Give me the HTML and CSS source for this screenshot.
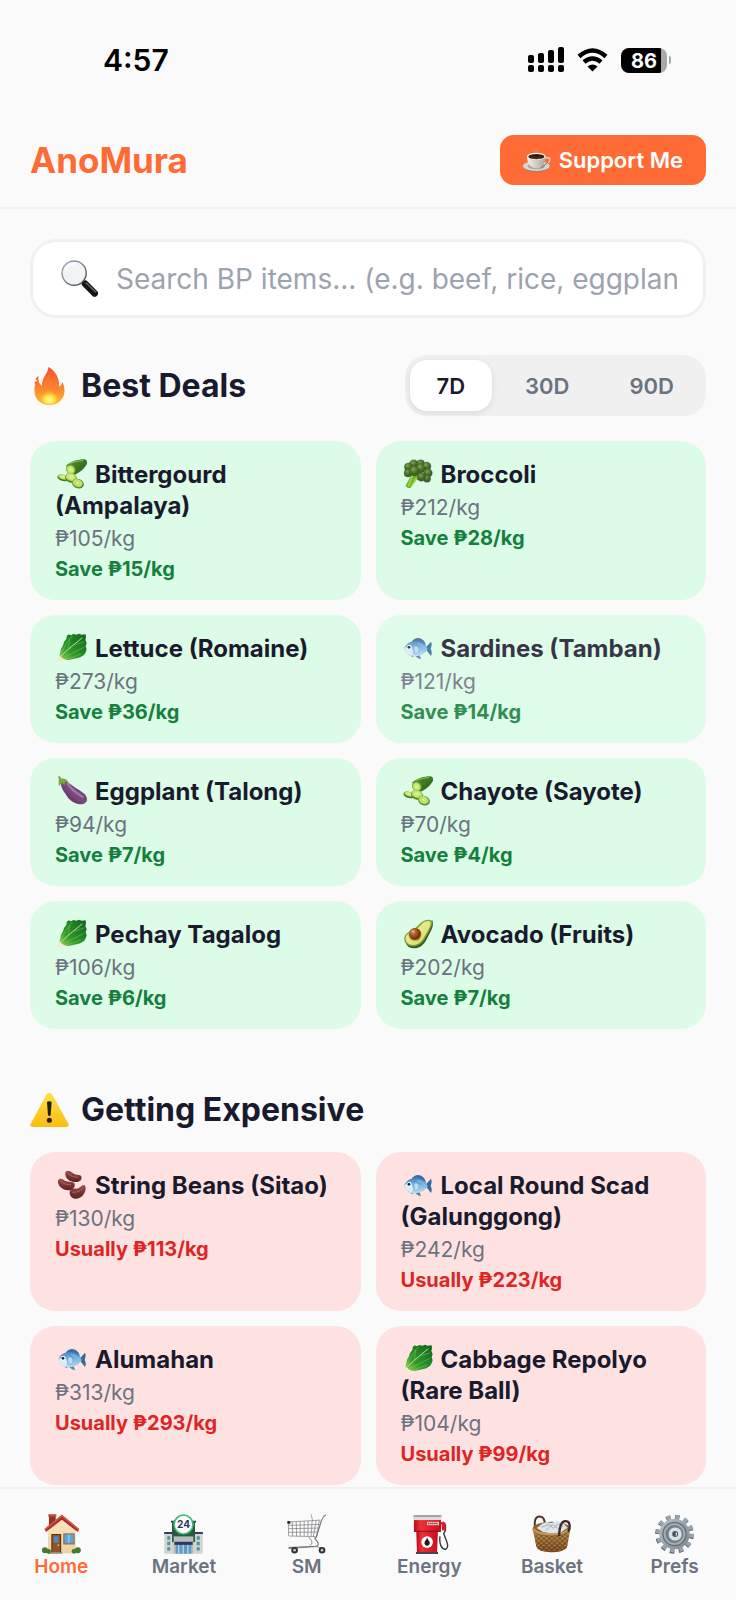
FILE: index.html
```html
<!DOCTYPE html>
<html lang="en">
<head>
<meta charset="utf-8">
<meta name="viewport" content="width=device-width, initial-scale=1">
<title>AnoMura</title>
<link rel="stylesheet" href="styles.css">
</head>
<body>
<svg class="sprite" aria-hidden="true">
  <defs>
    <linearGradient id="g-leaf" x1="0" y1="1" x2="1" y2="0"><stop offset="0" stop-color="#9bd04a"/><stop offset=".35" stop-color="#2f9a2c"/><stop offset="1" stop-color="#0a621d"/></linearGradient>
    <linearGradient id="g-cuke" x1="0" y1="0" x2="1" y2="1"><stop offset="0" stop-color="#5f9c30"/><stop offset="1" stop-color="#1d5418"/></linearGradient>
    <radialGradient id="g-slice"><stop offset="0" stop-color="#e2f29c"/><stop offset=".7" stop-color="#c3e36c"/><stop offset="1" stop-color="#95c744"/></radialGradient>
    <radialGradient id="g-floret" cx=".4" cy=".3"><stop offset="0" stop-color="#7d9c45"/><stop offset="1" stop-color="#3d6326"/></radialGradient>
    <linearGradient id="g-fish" x1="0" y1="0" x2="0" y2="1"><stop offset="0" stop-color="#3f83bd"/><stop offset=".5" stop-color="#7db9e3"/><stop offset="1" stop-color="#c4dcec"/></linearGradient>
    <linearGradient id="g-egg" x1="0" y1="1" x2="1" y2="0"><stop offset="0" stop-color="#4c2350"/><stop offset=".5" stop-color="#7d4a80"/><stop offset="1" stop-color="#5a2c60"/></linearGradient>
    <linearGradient id="g-avo" x1="0" y1="0" x2="1" y2="1"><stop offset="0" stop-color="#f5f2a0"/><stop offset="1" stop-color="#cfdc6a"/></linearGradient>
    <radialGradient id="g-pit" cx=".35" cy=".35"><stop offset="0" stop-color="#d68a4c"/><stop offset="1" stop-color="#7c3514"/></radialGradient>
    <linearGradient id="g-bean" x1="0" y1="0" x2="0" y2="1"><stop offset="0" stop-color="#96504b"/><stop offset="1" stop-color="#5c1f20"/></linearGradient>
    <linearGradient id="g-fire" x1="0" y1="0" x2="0" y2="1"><stop offset="0" stop-color="#f4502f"/><stop offset=".6" stop-color="#f98b2c"/><stop offset="1" stop-color="#fdc12f"/></linearGradient>
    <radialGradient id="g-flame" cy=".8"><stop offset="0" stop-color="#fffbb0"/><stop offset=".5" stop-color="#ffdd3c"/><stop offset="1" stop-color="#ff9d2e" stop-opacity="0"/></radialGradient>
    <linearGradient id="g-warn" x1="0" y1="0" x2="0" y2="1"><stop offset="0" stop-color="#ffdf45"/><stop offset="1" stop-color="#fbbd10"/></linearGradient>
    <linearGradient id="g-rim" x1="0" y1="0" x2="1" y2="1"><stop offset="0" stop-color="#8fa8d8"/><stop offset=".4" stop-color="#8b8d92"/><stop offset="1" stop-color="#3c3d40"/></linearGradient>
    <linearGradient id="g-cup" x1="0" y1="0" x2="1" y2="0"><stop offset="0" stop-color="#f4f1ec"/><stop offset="1" stop-color="#aaa69f"/></linearGradient>
    <linearGradient id="g-wall" x1="0" y1="0" x2="0" y2="1"><stop offset="0" stop-color="#fbe6bd"/><stop offset="1" stop-color="#ecd0a0"/></linearGradient>
    <linearGradient id="g-pump" x1="0" y1="0" x2="1" y2="0"><stop offset="0" stop-color="#b60d18"/><stop offset=".25" stop-color="#f0303a"/><stop offset="1" stop-color="#c90f1c"/></linearGradient>
    <linearGradient id="g-basket" x1="0" y1="0" x2="0" y2="1"><stop offset="0" stop-color="#b98a4a"/><stop offset="1" stop-color="#6d4319"/></linearGradient>
    <linearGradient id="g-gear" x1="0" y1="0" x2="1" y2="1"><stop offset="0" stop-color="#b9c3cb"/><stop offset="1" stop-color="#7d868e"/></linearGradient>
    <pattern id="p-weave" width="16" height="14" patternUnits="userSpaceOnUse"><path d="M0 3h8M8 10h8" stroke="#5c3612" stroke-width="4"/><path d="M8 3h8M0 10h8" stroke="#d9ab66" stroke-width="3"/></pattern>
  </defs>

  <symbol id="cucumber" viewBox="0 0 90 90">
    <path d="M27 20C42 7 62 1 82 1c9 1 10 10 6 17-8 13-24 25-37 30z" fill="url(#g-cuke)"/>
    <path d="M38 14C51 8 64 5 78 5" fill="none" stroke="#8cc04a" stroke-width="3"/>
    <ellipse cx="42" cy="31" rx="14" ry="16" transform="rotate(-30 42 31)" fill="#5d982c"/>
    <ellipse cx="41" cy="32" rx="12" ry="14" transform="rotate(-30 41 32)" fill="url(#g-slice)"/>
    <ellipse cx="17" cy="57" rx="16" ry="9" transform="rotate(18 17 57)" fill="#3f7a20"/>
    <ellipse cx="18" cy="54" rx="15" ry="7" transform="rotate(18 18 54)" fill="url(#g-slice)"/>
    <ellipse cx="42" cy="57" rx="18" ry="14" transform="rotate(15 42 57)" fill="#4a8524"/>
    <ellipse cx="42" cy="54" rx="17" ry="12" transform="rotate(15 42 54)" fill="url(#g-slice)"/>
    <ellipse cx="63" cy="74" rx="18" ry="14" transform="rotate(20 63 74)" fill="#4e8a28"/>
    <ellipse cx="62" cy="72" rx="16" ry="12" transform="rotate(20 62 72)" fill="url(#g-slice)"/>
    <ellipse cx="61" cy="72" rx="8" ry="5" transform="rotate(20 61 72)" fill="none" stroke="#b2d45c" stroke-width="2"/>
  </symbol>

  <symbol id="greens" viewBox="0 0 90 90">
    <path d="M29 9l6-5 7 3 7-4 9 2 8-3 8 3 12-1 1 9-2 8 4 9-3 10 3 9-3 9-5 8-11 7-12 3-12 3-12 2-16-2L6 72l4-14 2-11 6-10 3-10 7-9z" fill="url(#g-leaf)"/>
    <path d="M9 71c7-20 17-38 37-62M12 76c22-8 44-20 70-34M18 79c16-2 36-8 55-17M35 48l2-31M53 36l28-9" fill="none" stroke="#8cc358" stroke-width="1.6"/>
    <path d="M9 66c3 7 8 11 16 13-6 4-14 10-20 7S1 76 9 66z" fill="#f3ecd0"/>
    <path d="M10 72C26 54 50 36 76 14" stroke="#c5e28c" stroke-width="3" fill="none"/>
  </symbol>

  <symbol id="broccoli" viewBox="0 0 90 90">
    <path d="M26 45L8 80q2 7 14 7l18-23 22-8-14-22z" fill="#6fb32c"/>
    <path d="M28 50L16 82M42 54L24 84M55 50L38 62" stroke="#a6dc55" stroke-width="4" fill="none"/>
    <g fill="url(#g-floret)" stroke="#365520" stroke-width="1">
      <circle cx="32" cy="15" r="13"/><circle cx="53" cy="14" r="12"/><circle cx="16" cy="24" r="12"/><circle cx="71" cy="22" r="13"/><circle cx="15" cy="42" r="12"/><circle cx="75" cy="42" r="13"/><circle cx="72" cy="59" r="11"/><circle cx="55" cy="54" r="13"/><circle cx="53" cy="28" r="14"/><circle cx="34" cy="36" r="15"/>
    </g>
    <g fill="#8ba754" opacity=".55"><circle cx="29" cy="12" r="3"/><circle cx="50" cy="24" r="4"/><circle cx="31" cy="33" r="4"/><circle cx="68" cy="19" r="4"/><circle cx="13" cy="21" r="3"/><circle cx="73" cy="39" r="3"/></g>
  </symbol>

  <symbol id="fish" viewBox="0 0 90 90">
    <path d="M26 27C34 12 52 10 64 25l5 12z" fill="#3b6f9e"/>
    <path d="M36 68l14-2 4 13-9-3zM20 64l8 9 7-6z" fill="#5484ab"/>
    <path d="M66 46l18-20c4 8 1 15-1 22 3 6 5 13 1 21z" fill="#356a9a"/>
    <path d="M3 46C10 29 28 22 45 24c16 3 24 13 29 24-6 13-22 21-39 22C17 71 6 61 3 46z" fill="url(#g-fish)"/>
    <path d="M3 48c8-10 22-10 26 2 3 9-1 16-6 17C12 64 5 57 3 48z" fill="#dcebf4"/>
    <path d="M35 38c16 1 17 19 3 25-6-7-7-17-3-25z" fill="#b5ddf4" stroke="#5d9bc7" stroke-width="1.5"/>
    <circle cx="19" cy="43" r="7" fill="#fff"/><circle cx="18" cy="43" r="4.2" fill="#16202a"/>
    <path d="M43 31q14 3 23 15" stroke="#a4d5f2" stroke-width="2" fill="none"/>
  </symbol>

  <symbol id="eggplant" viewBox="0 0 90 90">
    <path d="M14 17C31 13 40 24 55 35c17 11 35 19 35 35 0 13-13 17-27 14C43 79 33 67 24 52 17 40 8 29 14 17z" fill="url(#g-egg)"/>
    <path d="M32 22c8 15 24 28 45 40" stroke="#ba8cba" stroke-width="7" stroke-linecap="round" fill="none" opacity=".65"/>
    <path d="M2 2l7-1 4 7c9-2 18 3 22 11l-10-1-3 10-6-8-11 10c1-7-1-15 1-21z" fill="#78a838"/>
  </symbol>

  <symbol id="avocado" viewBox="0 0 90 90">
    <path d="M88 4c6 18-5 33-16 55C62 79 48 89 31 88 14 86 5 74 9 60z" fill="#3c5a28"/>
    <path d="M57 9C67 1 81 0 86 5c5 10-4 28-17 49C58 73 46 82 31 82 14 82 2 71 4 57 6 42 22 36 34 29 44 23 48 15 57 9z" fill="#7f9f38"/>
    <path d="M60 12c8-6 18-7 22-4 4 8-5 24-17 44-9 17-20 26-34 26C16 78 7 69 8 57c1-12 17-18 28-24 11-6 16-14 24-21z" fill="url(#g-avo)"/>
    <circle cx="36" cy="47" r="20" fill="#c9b848"/><circle cx="36" cy="45" r="18" fill="url(#g-pit)"/>
    <ellipse cx="30" cy="37" rx="6" ry="4" fill="#edb27b" opacity=".7"/>
  </symbol>

  <symbol id="beans" viewBox="0 0 90 90">
    <g fill="url(#g-bean)">
      <path d="M25 9C27-1 38 1 46 8c9 8 18 4 26 9 5 9-2 19-15 19C40 36 23 26 25 9z"/>
      <path d="M3 32C7 22 16 27 24 32c9 5 18 1 27 6 7 9-2 23-18 23C17 60 1 47 3 32z"/>
      <path d="M38 71c-1-14 8-17 20-15 11 0 15-11 23-11 8 3 6 20-3 31-12 14-36 15-40-5z"/>
    </g>
    <path d="M32 9c7 8 17 13 30 13M10 33c8 8 18 12 31 11M46 67c12 1 24-3 31-13" stroke="#c98c83" stroke-width="2.5" stroke-linecap="round" fill="none" opacity=".6"/>
  </symbol>

  <symbol id="fire" viewBox="0 0 90 114">
    <path d="M42 0c-3 23-20 31-20 56C14 51 12 43 12 35 3 43-1 56 0 73c1 25 19 41 45 41 27 0 44-17 45-41 1-12-3-20-6-28-2 7-5 11-10 14C76 32 61 11 42 0z" fill="url(#g-fire)"/>
    <path d="M13 28l-4 12-5-2c0-5 4-9 9-10zM4 42l1 7-4 3c-1-4 0-8 3-10z" fill="#f4502f"/>
    <path d="M44 24c-4 16-14 25-14 42 10-4 15-13 17-23 9 11 14 22 13 33 5-3 8-8 10-14" fill="none" stroke="#ff7a3c" stroke-width="5" opacity=".7"/>
    <path d="M12 78c5 5 8 6 14 5-2-14 8-24 19-31 1 12 15 14 17 31 7 0 10-4 15-7 1 20-11 35-32 35S11 98 12 78z" fill="url(#g-flame)"/>
  </symbol>

  <symbol id="warning" viewBox="0 0 117 102">
    <path d="M50 4q8-8 16 0l49 88q4 10-7 10H9q-11 0-7-10z" fill="url(#g-warn)"/>
    <path d="M51 27q7-5 14 0l-3 40q-4 4-8 0z" fill="#20201c"/><circle cx="58" cy="82" r="7.5" fill="#20201c"/>
  </symbol>

  <symbol id="search" viewBox="0 0 110 110">
    <path d="M65 65l10 10" stroke="#77797e" stroke-width="6"/>
    <path d="M72 71l28 28" stroke="#141416" stroke-width="20" stroke-linecap="round"/>
    <path d="M73 67l31 29" stroke="#67696d" stroke-width="4"/>
    <circle cx="39" cy="39" r="36" fill="#f1f3f5" stroke="url(#g-rim)" stroke-width="4"/>
    <path d="M12 34C16 18 29 10 44 11" stroke="#fff" stroke-width="5" fill="none"/>
  </symbol>

  <symbol id="coffee" viewBox="0 0 84 75">
    <path d="M34 11c-5-4 5-6 0-11M43 11c-4-4 3-6 0-10" fill="none" stroke="#c9b2a2" stroke-width="1.5"/>
    <ellipse cx="40" cy="57" rx="40" ry="15" fill="#8f8981"/><ellipse cx="40" cy="54" rx="40" ry="15" fill="#d9d5cd"/><ellipse cx="40" cy="54" rx="26" ry="10" fill="#aca69c"/>
    <path d="M64 32c18-9 24 6 4 18" fill="none" stroke="#d8d4ce" stroke-width="4"/>
    <path d="M12 25c0 20 10 36 28 36s28-16 28-36z" fill="url(#g-cup)"/>
    <ellipse cx="40" cy="25" rx="28" ry="11" fill="#f6f4ef"/><ellipse cx="40" cy="26" rx="24" ry="8" fill="#38200f"/><path d="M26 29q14 7 28 0" stroke="#85583a" stroke-width="2" fill="none"/>
    <path d="M55 60l20-17" stroke="#777" stroke-width="3" stroke-linecap="round"/>
  </symbol>

  <symbol id="home" viewBox="0 0 114 118">
    <path d="M20 2h20v34H20z" fill="#92302a"/><path d="M18 1h24v7H18z" fill="#bf4c3d"/>
    <path d="M17 47L58 12l41 35v69H17z" fill="url(#g-wall)"/>
    <path d="M58 2L7 44l4 9 47-36 47 36 4-9z" fill="#a92e29"/><path d="M58 2L7 44l3 3L58 8l48 39 3-3z" fill="#d65a47"/>
    <path d="M27 59h29v56H27z" fill="#5a3018"/><path d="M30 62h23v52H30z" fill="#92522d"/><path d="M34 66h14v18H34z" fill="#4b8fc0"/><circle cx="48" cy="92" r="2.5" fill="#f0c450"/>
    <path d="M62 57h34v33H62z" fill="#8f7763"/><path d="M66 61h26v24H66z" fill="#5ca4dc"/><path d="M79 61v24" stroke="#d7eafa" stroke-width="2"/>
    <path d="M19 112h40v5H15z" fill="#9b8a7b"/>
    <g fill="#477a2a"><circle cx="8" cy="107" r="9"/><circle cx="19" cy="110" r="7"/><circle cx="105" cy="107" r="9"/><circle cx="94" cy="110" r="7"/></g>
  </symbol>

  <symbol id="cart" viewBox="0 0 118 120">
    <g fill="none" stroke="#75777b">
      <path d="M117 2c-9 5-10 11-14 21L89 69l-5 5 8 9q7 13-6 14L5 101" stroke-width="3.5"/>
      <path d="M3 24l98-6M5 34l93-3M5 44l90-2M5 55l86-1M6 66l81 2" stroke-width="2"/>
      <path d="M4 24l1 42M16 24l1 42M28 23l1 44M40 22v45M52 21v46M64 20l-1 47M76 20l-3 47M88 19l-8 49M73 1l5 20M98 19L89 68" stroke-width="2"/>
      <path d="M66 69l9 12q4 9-6 14M5 104l84-6 24 8" stroke-width="2.5"/>
    </g>
    <path d="M1 21h9v8H1z" fill="#222"/>
    <g fill="#303133"><circle cx="23" cy="109" r="10"/><circle cx="106" cy="109" r="10"/></g><g fill="#c6c7ca"><circle cx="23" cy="109" r="4"/><circle cx="106" cy="109" r="4"/></g>
  </symbol>

  <symbol id="pump" viewBox="0 0 114 118">
    <path d="M91 29q9-10 13 4v15l-5 10c8 21 18 40 6 46-12 1-20-15-17-38" fill="none" stroke="#333538" stroke-width="4"/>
    <path d="M92 24q10-5 12 8v17H94z" fill="#dc1d2a"/>
    <path d="M18 51h64l-3 64H20z" fill="url(#g-pump)"/><path d="M11 9h80v43H11z" fill="url(#g-pump)"/>
    <path d="M10 4h82v14H10z" fill="#dadcdf"/><path d="M10 4h82v4H10z" fill="#85878a"/><path d="M50 23h35v10H50z" fill="#f7ced0"/><path d="M53 28h29" stroke="#6c3034" stroke-width="4" stroke-dasharray="4 2"/>
    <path d="M11 51h80" stroke="#801017" stroke-width="3"/><path d="M17 112h65v6H17z" fill="#45474a"/>
    <circle cx="50" cy="83" r="17" fill="#fff"/><path d="M50 69c2 8 8 10 8 17q-1 8-8 8t-8-8c0-7 6-9 8-17z" fill="#1d1d1f"/>
  </symbol>

  <symbol id="basket" viewBox="0 0 118 118">
    <path d="M10 45C5 18 11 6 23 6s15 9 17 26" fill="none" stroke="#4c3526" stroke-width="6"/>
    <ellipse cx="59" cy="43" rx="57" ry="21" fill="#8e602b"/>
    <path d="M14 41l17-13 12-5 16 3 18-7 18 8 13 13-19 13-27 5-29-5z" fill="#dfe4ea"/><path d="M28 38l25-8 11 12 16-14 15 9M42 48l20-17 24 15" fill="none" stroke="#98a5b4" stroke-width="2.5"/>
    <path d="M3 47c15 20 98 22 113-5l-10 57q-9 15-48 15t-45-17z" fill="url(#g-basket)"/><path d="M3 47c15 20 98 22 113-5l-10 57q-9 15-48 15t-45-17z" fill="url(#p-weave)" opacity=".55"/>
    <path d="M3 44c15 22 99 23 112-3" fill="none" stroke="#c4985b" stroke-width="8"/><path d="M4 51c16 19 97 20 110-3" fill="none" stroke="#6e471f" stroke-width="2"/>
    <path d="M82 66C83 36 89 18 103 20c13 1 13 19 7 32" fill="none" stroke="#3e2b20" stroke-width="7"/>
  </symbol>

  <symbol id="gear" viewBox="0 0 118 118">
    <circle cx="59" cy="60" r="50" fill="none" stroke="#565f67" stroke-width="17" stroke-dasharray="13 13.18"/>
    <circle cx="60" cy="58" r="50" fill="none" stroke="#98a4ae" stroke-width="15" stroke-dasharray="12 14.18"/>
    <circle cx="59" cy="59" r="46" fill="url(#g-gear)"/><circle cx="59" cy="59" r="37" fill="#646e76"/><circle cx="59" cy="59" r="33" fill="#a0acb5"/><circle cx="59" cy="59" r="27" fill="#737e87"/>
    <circle cx="61" cy="59" r="20" fill="#d8e1e7"/><circle cx="61" cy="59" r="9" fill="#4b5258"/><path d="M63 52q8 7 0 14z" fill="#e3eaee"/>
  </symbol>
</svg>

<div class="status">
  <time class="clock">4:57</time>
  <div class="indicators">
    <svg class="signal" viewBox="0 0 36 26" aria-label="Signal"><rect y="8" width="6" height="8" rx="2"/><rect x="10" y="6" width="6" height="10" rx="2"/><rect x="20" y="3" width="6" height="13" rx="2"/><rect x="30" y="0" width="6" height="16" rx="2"/><rect y="18" width="6" height="7" rx="2"/><rect x="10" y="18" width="6" height="7" rx="2"/><rect x="20" y="18" width="6" height="7" rx="2"/><rect x="30" y="18" width="6" height="7" rx="2"/></svg>
    <svg class="wifi" viewBox="0 0 31 24" aria-label="Wi-Fi"><path d="M2 8.500Q15.500-3.500 29 8.500M7 14q8.500-7 17 0" fill="none" stroke="#000" stroke-width="4.500"/><path d="M10.500 18.500q5-4 10 0l-5 5z"/></svg>
    <div class="battery"><span class="charge">86</span></div>
  </div>
</div>

<header class="header">
  <h1 class="brand">AnoMura</h1>
  <button class="support" type="button"><svg class="cup"><use href="#coffee"/></svg>Support Me</button>
</header>

<main class="content">
  <label class="search">
    <svg class="lens" role="img" aria-label="Search"><use href="#search"/></svg>
    <input class="query" type="text" placeholder="Search BP items... (e.g. beef, rice, eggplant)">
  </label>

  <section class="section">
    <div class="section-head">
      <h2 class="title"><svg class="title-icon"><use href="#fire"/></svg>Best Deals</h2>
      <div class="range" role="group" aria-label="Period">
        <button class="period active" type="button" aria-pressed="true">7D</button>
        <button class="period" type="button" aria-pressed="false">30D</button>
        <button class="period" type="button" aria-pressed="false">90D</button>
      </div>
    </div>
    <div class="cards">
      <article class="card deal"><h3 class="name"><svg class="emoji"><use href="#cucumber"/></svg>Bittergourd (Ampalaya)</h3><p class="price">₱105/kg</p><p class="note">Save ₱15/kg</p></article>
      <article class="card deal"><h3 class="name"><svg class="emoji"><use href="#broccoli"/></svg>Broccoli</h3><p class="price">₱212/kg</p><p class="note">Save ₱28/kg</p></article>
      <article class="card deal"><h3 class="name"><svg class="emoji"><use href="#greens"/></svg>Lettuce (Romaine)</h3><p class="price">₱273/kg</p><p class="note">Save ₱36/kg</p></article>
      <article class="card deal faded"><h3 class="name"><svg class="emoji"><use href="#fish"/></svg>Sardines (Tamban)</h3><p class="price">₱121/kg</p><p class="note">Save ₱14/kg</p></article>
      <article class="card deal"><h3 class="name"><svg class="emoji"><use href="#eggplant"/></svg>Eggplant (Talong)</h3><p class="price">₱94/kg</p><p class="note">Save ₱7/kg</p></article>
      <article class="card deal"><h3 class="name"><svg class="emoji"><use href="#cucumber"/></svg>Chayote (Sayote)</h3><p class="price">₱70/kg</p><p class="note">Save ₱4/kg</p></article>
      <article class="card deal"><h3 class="name"><svg class="emoji"><use href="#greens"/></svg>Pechay Tagalog</h3><p class="price">₱106/kg</p><p class="note">Save ₱6/kg</p></article>
      <article class="card deal"><h3 class="name"><svg class="emoji"><use href="#avocado"/></svg>Avocado (Fruits)</h3><p class="price">₱202/kg</p><p class="note">Save ₱7/kg</p></article>
    </div>
  </section>

  <section class="section">
    <div class="section-head">
      <h2 class="title"><svg class="title-icon"><use href="#warning"/></svg>Getting Expensive</h2>
    </div>
    <div class="cards">
      <article class="card rise"><h3 class="name"><svg class="emoji"><use href="#beans"/></svg>String Beans (Sitao)</h3><p class="price">₱130/kg</p><p class="note">Usually ₱113/kg</p></article>
      <article class="card rise"><h3 class="name"><svg class="emoji"><use href="#fish"/></svg>Local Round Scad (Galunggong)</h3><p class="price">₱242/kg</p><p class="note">Usually ₱223/kg</p></article>
      <article class="card rise"><h3 class="name"><svg class="emoji"><use href="#fish"/></svg>Alumahan</h3><p class="price">₱313/kg</p><p class="note">Usually ₱293/kg</p></article>
      <article class="card rise"><h3 class="name"><svg class="emoji"><use href="#greens"/></svg>Cabbage Repolyo (Rare Ball)</h3><p class="price">₱104/kg</p><p class="note">Usually ₱99/kg</p></article>
    </div>
  </section>
</main>

<nav class="tabs">
  <a class="tab current" href="#" aria-current="page"><svg class="tab-icon"><use href="#home"/></svg>Home</a>
  <a class="tab" href="#">
    <svg class="tab-icon" viewBox="0 0 114 118">
      <path d="M0 54h114v63H0z" fill="#d3d6ce"/><path d="M0 53h28v6H0zM86 53h28v6H86z" fill="#353968"/>
      <path d="M23 23h68v60H23z" fill="#275c43"/><path d="M20 20h12v5H20zM82 20h12v5H82z" fill="#30345f"/>
      <path d="M28 66h58v51H28z" fill="#b9beb9"/><path d="M34 88h46v29H34z" fill="#5f9bbf"/><path d="M43 88v29M56 88v29M70 88v29" stroke="#d1e6ee" stroke-width="3"/><path d="M30 82h54v9H30z" fill="#2f3568"/>
      <path d="M9 66h9v10H9zM9 82h9v10H9zM9 98h9v10H9zM96 66h9v10h-9zM96 82h9v10h-9zM96 98h9v10h-9z" fill="#4e92ab"/>
      <circle cx="57" cy="31" r="28" fill="#fff" stroke="#3bbd6c" stroke-width="5"/>
      <text x="57" y="42" text-anchor="middle" class="sign">24</text>
    </svg>
    Market
  </a>
  <a class="tab" href="#"><svg class="tab-icon"><use href="#cart"/></svg>SM</a>
  <a class="tab" href="#"><svg class="tab-icon"><use href="#pump"/></svg>Energy</a>
  <a class="tab" href="#"><svg class="tab-icon"><use href="#basket"/></svg>Basket</a>
  <a class="tab" href="#"><svg class="tab-icon"><use href="#gear"/></svg>Prefs</a>
</nav>
</body>
</html>
```
FILE: styles.css
```css
* {
  box-sizing: border-box;
}

body {
  margin: 0;
  min-height: 100vh;
  display: flex;
  flex-direction: column;
  background: #fafafa;
  color: #1a1a2e;
  font-family: Inter, "Liberation Sans", sans-serif;
}

h1, h2, h3, p {
  margin: 0;
}

button, input {
  font-family: inherit;
}

.sprite {
  position: absolute;
  width: 0;
  height: 0;
}

.sign {
  font-size: 30px;
  font-weight: 700;
  fill: #30345f;
}

.status {
  height: 110px;
  padding: 10px 65px 0 103px;
  display: flex;
  align-items: center;
  justify-content: space-between;
  color: #000;
}

.clock {
  font-size: 30px;
  font-weight: 600;
}

.indicators {
  display: flex;
  align-items: center;
  gap: 13px;
}

.signal {
  width: 36px;
  height: 26px;
}

.wifi {
  width: 31px;
  height: 24px;
}

.battery {
  display: flex;
  align-items: center;
  gap: 2px;
}

.battery::after {
  content: "";
  width: 2px;
  height: 8px;
  border-radius: 0 2px 2px 0;
  background: #a8a8a8;
}

.charge {
  width: 46px;
  height: 25px;
  border-radius: 8px;
  background: linear-gradient(to right, #000 40px, #a8a8a8 40px);
  color: #fff;
  font-size: 20px;
  font-weight: 700;
  line-height: 26px;
  text-align: center;
}

.header {
  padding: 25px 30px 22px;
  display: flex;
  align-items: center;
  justify-content: space-between;
  border-bottom: 2px solid #f0f0f0;
}

.brand {
  color: #ff6b35;
  font-size: 35px;
  font-weight: 700;
  line-height: 50px;
}

.support {
  height: 50px;
  padding: 0 23px;
  display: flex;
  align-items: center;
  gap: 8px;
  border: 0;
  border-radius: 14px;
  background: #ff6b35;
  color: #fff;
  font-size: 22px;
  font-weight: 600;
}

.cup {
  width: 28px;
  height: 25px;
}

.content {
  flex: 1;
  padding: 30px 30px 0;
}

.search {
  height: 79px;
  padding: 0 26px 0 28px;
  display: flex;
  align-items: center;
  gap: 18px;
  border: 3px solid #f0f0f0;
  border-radius: 26px;
  background: #fff;
}

.lens {
  flex: none;
  width: 37px;
  height: 37px;
}

.query {
  flex: 1;
  min-width: 0;
  padding: 0;
  border: 0;
  outline: 0;
  background: transparent;
  color: #1a1a2e;
  font-size: 28px;
}

.query::placeholder {
  color: #9ca3af;
}

.section {
  padding-top: 37px;
}

.section + .section {
  padding-top: 50px;
}

.section-head {
  min-height: 61px;
  margin-bottom: 25px;
  display: flex;
  align-items: center;
  justify-content: space-between;
}

.section + .section .section-head {
  margin-bottom: 12px;
}

.title {
  display: flex;
  align-items: center;
  gap: 12px;
  font-size: 32px;
  font-weight: 700;
}

.title-icon {
  width: 39px;
  height: 38px;
}

.range {
  padding: 5px;
  display: flex;
  gap: 6px;
  border-radius: 22px;
  background: #f0f0f0;
}

.period {
  height: 51px;
  padding: 0 27px;
  border: 0;
  border-radius: 17px;
  background: transparent;
  color: #6b7280;
  font-size: 22px;
  font-weight: 600;
}

.period.active {
  background: #fff;
  color: #1a1a2e;
  box-shadow: 0 2px 6px rgba(0, 0, 0, 0.1);
}

.cards {
  display: grid;
  grid-template-columns: 1fr 1fr;
  gap: 15px;
}

.card {
  padding: 18px 20px 16px 25px;
  border-radius: 25px;
}

.deal {
  background: #dcfce7;
}

.rise {
  background: #fee2e2;
}

.faded {
  opacity: 0.88;
}

.name {
  margin-bottom: 3px;
  font-size: 24px;
  font-weight: 700;
  line-height: 31px;
}

.emoji {
  width: 30px;
  height: 30px;
  margin: 0 8px 0 2px;
  vertical-align: -6px;
}

.price {
  color: #6b7280;
  font-size: 21px;
  line-height: 30px;
}

.note {
  font-size: 20px;
  font-weight: 700;
  line-height: 30px;
}

.deal .note {
  color: #15803d;
}

.rise .note {
  color: #dc2626;
}

.tabs {
  position: sticky;
  bottom: 0;
  height: 113px;
  padding-top: 25px;
  display: grid;
  grid-template-columns: repeat(6, 1fr);
  border-top: 2px solid #f0f0f0;
  background: #fafafa;
}

.tab {
  display: flex;
  flex-direction: column;
  align-items: center;
  color: #6b7280;
  font-size: 19px;
  font-weight: 600;
  line-height: 25px;
  text-decoration: none;
}

.tab.current {
  color: #ff6b35;
}

.tab-icon {
  width: 39px;
  height: 40px;
}
```
